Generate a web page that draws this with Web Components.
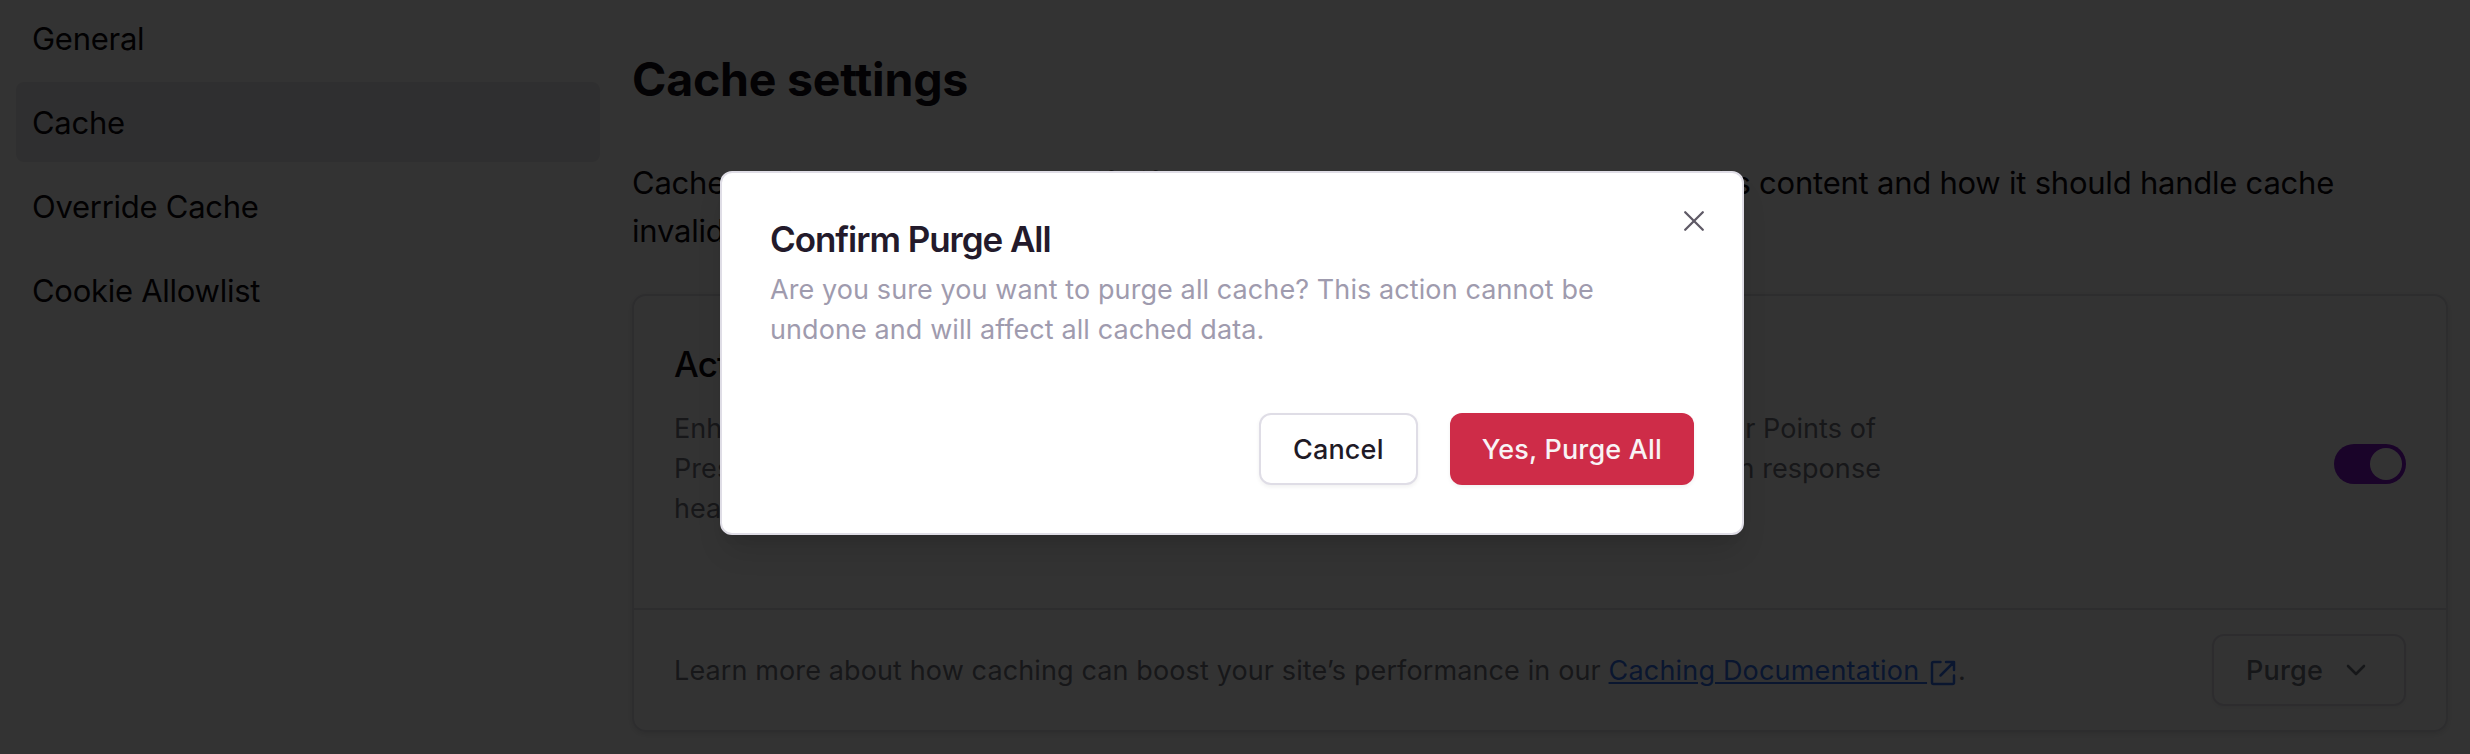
<!DOCTYPE html>
<html lang="en">
<head>
<meta charset="utf-8">
<title>Cache settings</title>
<style>
  html, body { margin: 0; height: 754px; overflow: hidden; background: #fff; }
  body { font-family: Inter, "Liberation Sans", sans-serif; color: #0f0d14; }
</style>
</head>
<body>
<settings-page></settings-page>
<script>
const define = (name, html) => {
  const template = document.createElement('template');
  template.innerHTML = html;
  customElements.define(name, class extends HTMLElement {
    constructor() {
      super();
      this.attachShadow({ mode: 'open' }).append(template.content.cloneNode(true));
    }
  });
};

define('nav-item', `
<style>
  :host { display: flex; align-items: center; box-sizing: border-box; height: 80px; padding: 2px 16px 0; border-radius: 8px;
    font-size: 31px; line-height: 48px; letter-spacing: -0.27px; color: #0a090d; white-space: nowrap; }
  :host([active]) { background: #ebebed; }
</style><slot></slot>`);

define('side-nav', `
<style>
  :host { display: flex; flex-direction: column; gap: 4px; width: 584px; margin: -2px 32px 0 16px; flex: none; }
</style><slot></slot>`);

define('toggle-switch', `
<style>
  :host { display: flex; justify-content: flex-end; box-sizing: border-box; width: 72px; height: 40px; padding: 4px; border-radius: 20px;
    background: #8214ce; flex: none; }
  i { width: 32px; height: 32px; border-radius: 50%; background: #fff; }
</style><i></i>`);

define('ui-button', `
<style>
  :host { display: inline-flex; align-items: center; justify-content: center; box-sizing: border-box; height: 72px; padding: 2px 32px 0; flex: none;
    border: 2px solid #dfdde6; border-radius: 12px; background: #fff; color: #1f1a26; white-space: nowrap;
    font-size: 27px; font-weight: 500; line-height: 40px; letter-spacing: 0.17px; box-shadow: 0 2px 4px rgba(0,0,0,.06); }
  :host([variant="danger"]) { background: #ce2c48; border: 0; color: #f8f3f5; }
  :host([muted]) { color: #6e727d; }
  ::slotted(svg) { margin-left: 17px; }
</style><slot></slot>`);

define('text-line', `
<style>
  :host { display: flex; justify-content: space-between; white-space: pre; }
</style><slot></slot>`);

define('settings-card', `
<style>
  :host { display: block; box-sizing: border-box; height: 438px; border: 2px solid #dfdee5; border-radius: 14px; box-shadow: 0 2px 6px rgba(0,0,0,.12); }
  .top { display: flex; justify-content: space-between; box-sizing: border-box; height: 314px; padding: 48px 40px 0; border-bottom: 2px solid #dfdee5; }
  .body { width: 1209px; }
  h2 { margin: 0 0 25px; font-size: 35px; line-height: 40px; font-weight: 500; letter-spacing: -0.9px; color: #0a080e; }
  .desc { font-size: 27px; line-height: 40px; letter-spacing: 0.06px; color: #73767f; }
  .foot { display: flex; align-items: center; justify-content: space-between; height: 120px; padding: 0 40px;
    font-size: 27px; line-height: 40px; letter-spacing: 0.12px; color: #73767f; white-space: pre; }
  .foot p { margin: 0; padding-top: 2px; height: 40px; }
  a { color: #3370ec; letter-spacing: 0.18px; text-decoration: underline; text-decoration-thickness: 2px; text-underline-offset: 2px; }
  p svg { vertical-align: -9px; margin: 0 0 0 1px; }
  toggle-switch { margin-top: 100px; }
</style>
<div class="top">
  <div class="body">
    <h2>Activate Cache</h2>
    <div class="desc">
      <text-line style="width:1202px"><span>Enhance site speed by storing your content in memory at</span><span>our Points of</span></text-line>
      <text-line style="width:1207px"><span>Presence. Caching behavior is determined by the values</span><span>in response</span></text-line>
      <text-line><span>headers.</span></text-line>
    </div>
  </div>
  <toggle-switch></toggle-switch>
</div>
<div class="foot">
  <p>Learn more about how caching can boost your site’s performance in our <a href="#">Caching Documentation <svg width="30" height="32" viewBox="0 0 30 32" fill="none" stroke="#3370ec" stroke-width="2.5" stroke-linejoin="round" stroke-linecap="round"><path d="M12.5 5H5.5Q4 5 4 6.500V25.500Q4 27 5.500 27H24.500Q26 27 26 25.500V18.500M18 5H26V13M26 5L12.500 18.500"/></svg></a>.</p>
  <ui-button muted>Purge<svg width="32" height="32" viewBox="0 0 32 32" fill="none" stroke="#6e727d" stroke-width="2.600" stroke-linecap="round" stroke-linejoin="round"><path d="M8 11L16 19L24 11"/></svg></ui-button>
</div>`);

define('confirm-dialog', `
<style>
  :host { display: block; position: relative; box-sizing: border-box; width: 1024px; height: 364px; padding: 46px 48px 48px;
    border: 2px solid #dfdde6; border-radius: 12px; background: #fff; box-shadow: 0 20px 30px -6px rgba(0,0,0,.12), 0 8px 12px -8px rgba(0,0,0,.12); }
  h3 { margin: 0 0 11px; font-size: 35px; line-height: 40px; font-weight: 600; letter-spacing: -1.05px; color: #231a2b; }
  p { margin: 0 0 63px; font-size: 27px; line-height: 40px; letter-spacing: 0.09px; color: #9f9bae; white-space: nowrap; }
  .actions { display: flex; justify-content: flex-end; gap: 32px; }
  .close { position: absolute; top: 32px; right: 32px; }
</style>
<h3>Confirm Purge All</h3>
<p>Are you sure you want to purge all cache? This action cannot be<br>undone and will affect all cached data.</p>
<div class="actions"><ui-button>Cancel</ui-button><ui-button variant="danger">Yes, Purge All</ui-button></div>
<svg class="close" width="32" height="32" viewBox="0 0 32 32" stroke="#5f5a66" stroke-width="2.300" stroke-linecap="round"><path d="M7.200 7.200L24.800 24.800M24.800 7.200L7.200 24.800"/></svg>`);

define('settings-page', `
<style>
  :host { display: flex; position: relative; width: 2470px; height: 754px; overflow: hidden; }
  main { width: 1816px; flex: none; }
  h1 { margin: 51px 0 52px; font-size: 46.500px; line-height: 56px; font-weight: 700; letter-spacing: -0.25px; color: #0f0d14; }
  .intro { margin-bottom: 39px; font-size: 31px; line-height: 48px; letter-spacing: -0.23px; color: #0a090d; }
  .overlay { position: absolute; inset: 0; box-sizing: border-box; padding: 171px 0 0 720px; background: rgba(0,0,0,.8); }
</style>
<side-nav>
  <nav-item>General</nav-item>
  <nav-item active>Cache</nav-item>
  <nav-item>Override Cache</nav-item>
  <nav-item>Cookie Allowlist</nav-item>
</side-nav>
<main>
  <h1>Cache settings</h1>
  <div class="intro">
    <text-line style="width:1702px"><span>Cache settings are used to specify if and how the edge should store</span><span>its content and how it should handle cache</span></text-line>
    <text-line><span>invalidation.</span></text-line>
  </div>
  <settings-card></settings-card>
</main>
<div class="overlay"><confirm-dialog></confirm-dialog></div>`);
</script>
</body>
</html>
